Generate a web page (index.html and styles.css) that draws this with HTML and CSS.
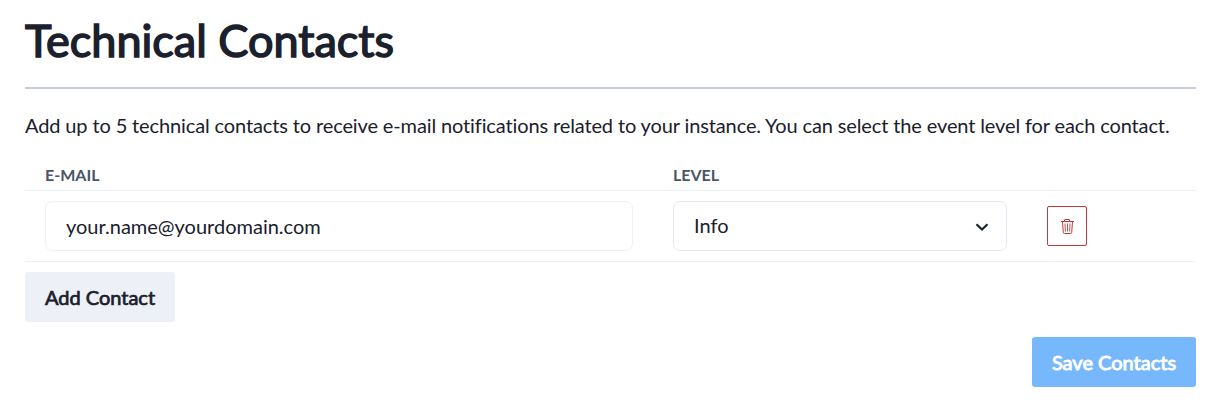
FILE: index.html
```html
<!DOCTYPE html>
<html lang="en">
<head>
<meta charset="utf-8">
<title>Technical Contacts</title>
<link rel="stylesheet" href="styles.css">
</head>
<body>
<main class="page">
  <h1 class="title">Technical Contacts</h1>
  <p class="intro">Add up to 5 technical contacts to receive e-mail notifications related to your instance. You can select the event level for each contact.</p>
  <div class="row head"><span>E-mail</span><span>Level</span></div>
  <div class="row entry">
    <div class="field email">your.name@yourdomain.com</div>
    <div class="field level"><span>Info</span>
      <svg class="chevron" viewBox="0 0 14 10"><path d="M1.500 2.200l5.500 5.300 5.500-5.300"/></svg>
    </div>
    <button class="remove" aria-label="Remove contact">
      <svg class="trash" viewBox="0 0 16 18"><path d="M2 4.500h13M5.500 4.500v-1.500q0-.5.5-.5h4q.5 0 .5.500v1.500M3.500 4.500l.8 11q.1 1 1 1h6.400q.9 0 1-1l.8-11"/><path class="slats" d="M6 6.500l.4 8M8.500 6.500v8M11 6.500l-.4 8"/></svg>
    </button>
  </div>
  <button class="btn add">Add Contact</button>
  <button class="btn save">Save Contacts</button>
</main>
</body>
</html>
```
FILE: styles.css
```css
* { box-sizing: border-box; }
body { margin: 0; background: #fff; color: #1a202c; font-family: Lato, sans-serif; font-size: 20px; font-variant-ligatures: none; }
.page { display: flex; flex-direction: column; padding: 10px 22px 0 25px; }
.title { margin: 0; height: 79px; border-bottom: 2px solid #c7ccdc; font-size: 45px; line-height: 61px; font-weight: 400; -webkit-text-stroke: 1.5px #1a202c; }
.intro { margin: 21px 0 0; line-height: 30px; white-space: nowrap; letter-spacing: -0.125px; }
.row { display: grid; grid-template-columns: 588px 334px 40px; column-gap: 40px; padding: 0 20px; border-bottom: 1px solid #edf2f7; }
.head { height: 51px; padding-top: 24px; font-size: 16px; line-height: 22px; font-weight: 700; text-transform: uppercase; color: #4a5568; }
.entry { height: 71px; align-items: center; }
.field { display: flex; align-items: center; justify-content: space-between; height: 50px; padding: 0 17px 0 20px; border: 1px solid #edf2f7; border-radius: 7px; }
.level { border-color: #e2e8f0; }
.level span { padding-bottom: 2px; }
.chevron { width: 14px; height: 10px; margin-top: 2px; fill: none; stroke: #1a202c; stroke-width: 2.2; }
.remove { display: flex; align-items: center; justify-content: center; width: 40px; height: 40px; padding: 0; background: #fff; border: 1px solid #c0393b; border-radius: 2px; }
.trash { width: 16px; height: 18px; margin-bottom: 1px; fill: none; stroke: #c0393b; stroke-width: 1; }
.slats { stroke-width: 0.9; }
.btn { height: 50px; padding: 0; border: 0; border-radius: 3px; font: 400 20px Lato, sans-serif; color: #1a202c; -webkit-text-stroke: 0.7px currentColor; }
.add { width: 150px; margin-top: 10px; background: #edf1f7; }
.save { width: 164px; margin-top: 15px; align-self: flex-end; background: #76b8fb; color: #fff; -webkit-text-stroke-width: 0.9px; }
```
